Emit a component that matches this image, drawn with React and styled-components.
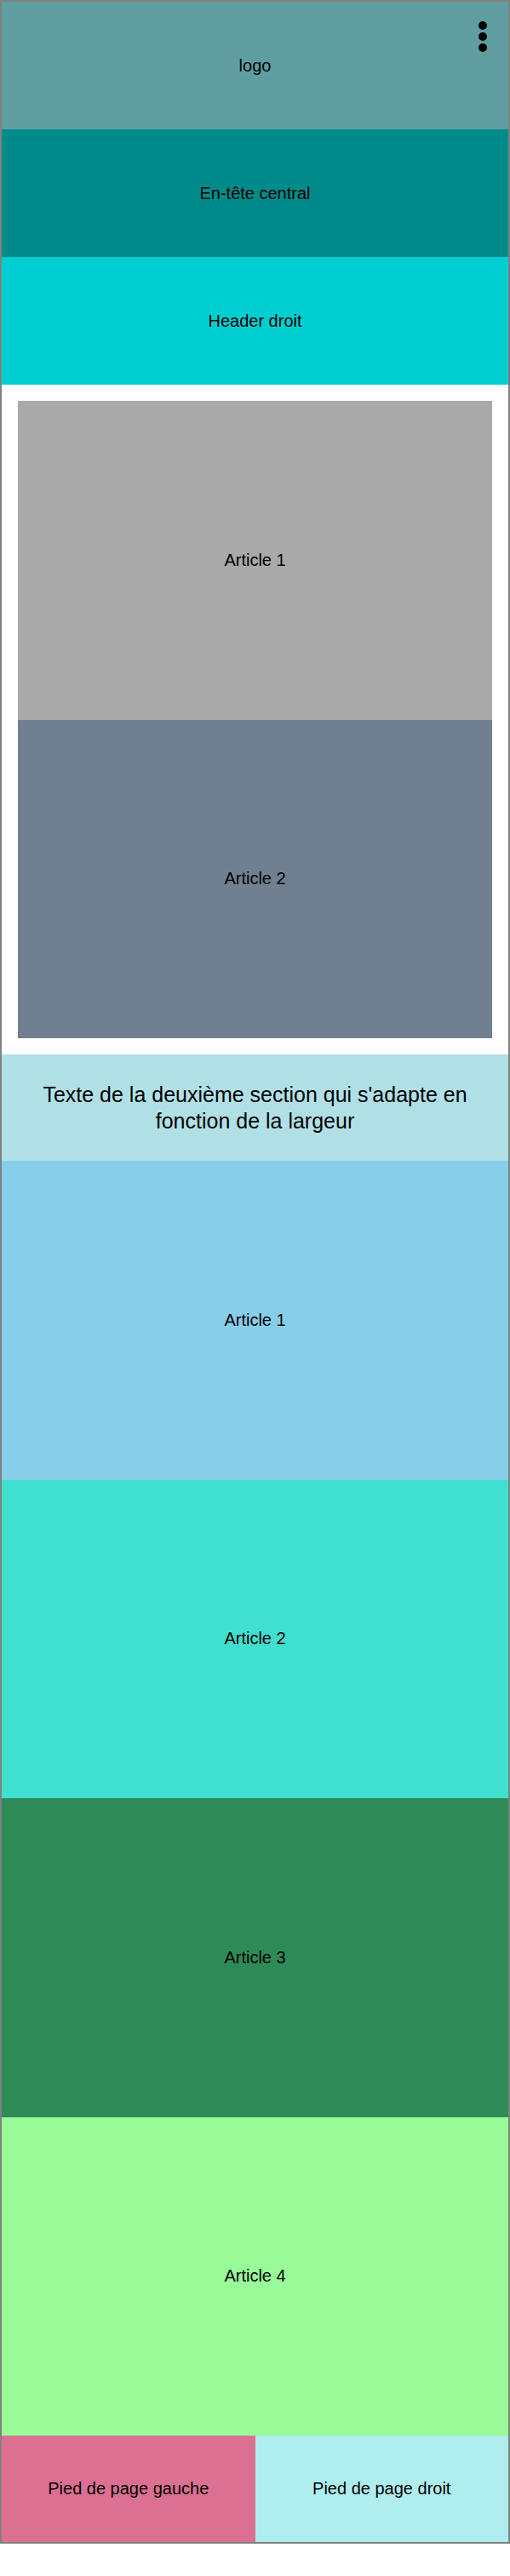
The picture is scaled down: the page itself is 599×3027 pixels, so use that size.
import React from "react";
import styled, { createGlobalStyle } from "styled-components";

const Global = createGlobalStyle`
  html, body { margin: 0; padding: 0; background: #ffffff; }
  body { font-family: "Liberation Sans", Arial, sans-serif; color: #000; }
  * { box-sizing: border-box; }
`;

const Page = styled.div`
  width: 599px;
  border: 2px solid #808080;
  display: flex;
  flex-direction: column;
`;

const Header = styled.header`
  display: flex;
  flex-direction: column;
`;

const Band = styled.div`
  position: relative;
  height: ${(p) => p.$h || 150}px;
  background: ${(p) => p.$bg};
  display: flex;
  align-items: center;
  justify-content: center;
  font-size: 20px;
`;

const Menu = styled.div`
  position: absolute;
  top: 23px;
  right: 25px;
  display: flex;
  flex-direction: column;
  gap: 3px;
`;

const Dot = styled.span`
  display: block;
  width: 10px;
  height: 10px;
  border-radius: 50%;
  background: #000;
`;

const Boxed = styled.section`
  padding: 19px;
  background: #fff;
  display: flex;
  flex-direction: column;
`;

const Article = styled.article`
  height: 374.5px;
  background: ${(p) => p.$bg};
  display: flex;
  align-items: center;
  justify-content: center;
  font-size: 20px;
`;

const Intro = styled.section`
  height: 125px;
  background: #b0e0e6;
  display: flex;
  align-items: center;
  justify-content: center;
  padding: 0 6px;
`;

const IntroText = styled.p`
  margin: 0;
  text-align: center;
  font-size: 25px;
  line-height: 31px;
`;

const List = styled.section`
  display: flex;
  flex-direction: column;
`;

const Footer = styled.footer`
  display: grid;
  grid-template-columns: 1fr 1fr;
  height: 125px;
`;

const FootCell = styled.div`
  background: ${(p) => p.$bg};
  display: flex;
  align-items: center;
  justify-content: center;
  font-size: 20px;
`;

export default function App() {
  return (
    <>
      <Global />
      <Page>
        <Header>
          <Band $bg="#5f9ea0">
            logo
            <Menu aria-label="menu">
              <Dot />
              <Dot />
              <Dot />
            </Menu>
          </Band>
          <Band $bg="#008b8b">En-tête central</Band>
          <Band $bg="#00ced1">Header droit</Band>
        </Header>
        <Boxed>
          <Article $bg="#a9a9a9">Article 1</Article>
          <Article $bg="#708090">Article 2</Article>
        </Boxed>
        <Intro>
          <IntroText>
            Texte de la deuxième section qui s'adapte en fonction de la largeur
          </IntroText>
        </Intro>
        <List>
          <Article $bg="#87ceeb">Article 1</Article>
          <Article $bg="#40e0d0">Article 2</Article>
          <Article $bg="#2e8b57">Article 3</Article>
          <Article $bg="#98fb98">Article 4</Article>
        </List>
        <Footer>
          <FootCell $bg="#db7093">Pied de page gauche</FootCell>
          <FootCell $bg="#afeeee">Pied de page droit</FootCell>
        </Footer>
      </Page>
    </>
  );
}
